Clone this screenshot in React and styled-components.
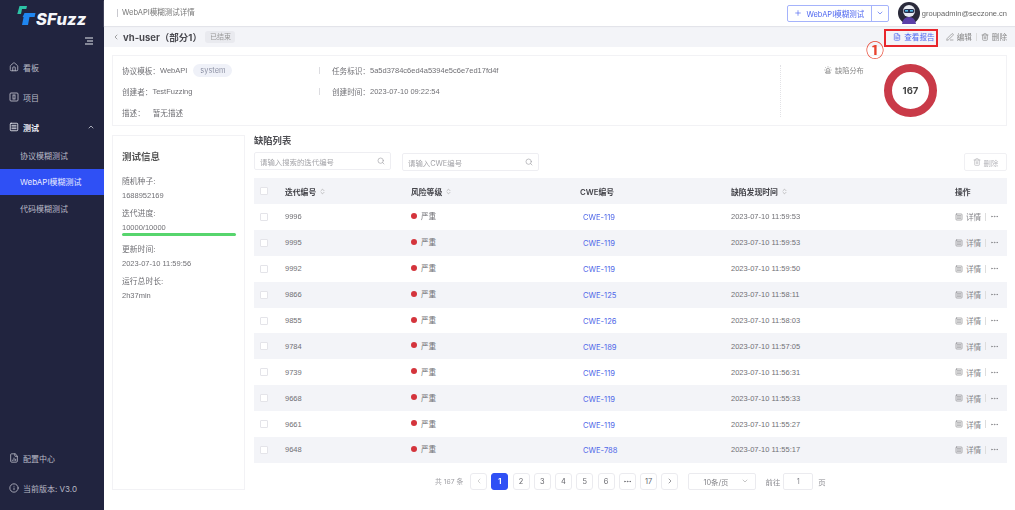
import React from "react";
import styled, { createGlobalStyle } from "styled-components";
import {
  House, SquareMenu, ChevronUp, ChevronLeft, ChevronRight, ChevronDown, Plus, FileText, PenLine,
  Trash2, Siren, Search, Ellipsis, FileChartColumn, Info, ChevronsUpDown,
} from "lucide-react";

const Global = createGlobalStyle`
  html, body { margin: 0; padding: 0; background: #fff; }
  * { box-sizing: border-box; }
  body { font-family: Inter, "Noto Sans CJK SC", sans-serif; font-size: 8px; color: #666; }
`;

const Page = styled.div`display: flex; width: 1015px; height: 510px; overflow: hidden; filter: blur(0.3px);`;
const Sidebar = styled.aside`
  width: 104px; flex: none; background: #21243f; color: #c6c7d1; display: flex; flex-direction: column;
`;
const Logo = styled.div`display: flex; height: 28px; padding: 5px 0 0 17px;`;
const LogoText = styled.span`
  font: italic 800 16.5px/17px Inter, sans-serif; color: #f4f6fa; margin: 6px 0 0 -1px; letter-spacing: .2px;
`;
const Burger = styled.div`display: flex; justify-content: flex-end; padding: 9px 11px 0 0; height: 24px; color: #e8e9ef;`;
const NavItem = styled.div`
  height: 30px; display: flex; align-items: center; gap: 4px; padding-left: 9px; font-size: 8px;
  color: ${p => (p.$strong ? "#eceef4" : "#b9bac6")}; font-weight: ${p => (p.$strong ? 600 : 400)};
  svg { flex: none; }
`;
const NavEnd = styled.span`margin-left: auto; margin-right: 9px; display: flex;`;
const SubItem = styled.div`
  height: 26.5px; display: flex; align-items: center; padding-left: 20px; font-size: 8px;
  color: ${p => (p.$active ? "#e8ebff" : "#b9bac6")}; background: ${p => (p.$active ? "#2f50f5" : "transparent")};
`;
const SideSpacer = styled.div`flex: 1;`;
const SideFoot = styled.div`height: 7px; flex: none;`;

const Main = styled.div`flex: 1; min-width: 0; display: flex; flex-direction: column; position: relative;`;
const TopBar = styled.header`
  height: 26px; flex: none; display: flex; align-items: center; padding: 0 8px 0 13px;
  box-shadow: 0 1px 1px #e3e4ea; position: relative; z-index: 1;
`;
const Crumb = styled.div`border-left: 1px solid #c9c9cf; padding-left: 4px; font-size: 7.5px; color: #777; line-height: 8px;`;
const SplitButton = styled.div`
  margin-left: auto; display: flex; height: 17px; border: 1px solid #a5b3fb; border-radius: 2px; color: #4f67f0; width: 102px;
`;
const SplitMain = styled.div`
  flex: 1; display: flex; align-items: center; justify-content: center; gap: 4px; font-size: 7.5px; border-right: 1px solid #a5b3fb;
`;
const SplitArrow = styled.div`width: 16px; display: flex; align-items: center; justify-content: center;`;
const Avatar = styled.svg`width: 22px; height: 22px; margin-left: 9px; flex: none;`;
const UserName = styled.span`margin-left: 2px; font: 7.5px "Liberation Sans", sans-serif; color: #666; white-space: nowrap;`;

const SubBar = styled.div`
  height: 21px; flex: none; background: #f3f4f8; display: flex; align-items: center; padding: 0 8px;
`;
const TitleName = styled.span`font-size: 9.5px; font-weight: 700; color: #4a4a50; margin-left: 3px;`;
const StatusTag = styled.span`
  margin-left: 3px; background: #e9eaef; color: #999; font-size: 7px; border-radius: 3px; padding: 2px 4px 2px 5px; line-height: 8px;
`;
const Actions = styled.div`margin-left: auto; display: flex; align-items: center; color: #888; font-size: 7.6px;`;
const Action = styled.span`
  display: inline-flex; align-items: center; gap: 3px; color: ${p => (p.$primary ? "#4f67f0" : "#888")};
  margin-right: ${p => p.$gap || 0}px;
`;
const ActionSep = styled.span`width: 1px; height: 8px; background: #ddd; margin: 0 4px;`;

const Content = styled.div`flex: 1; display: flex; flex-direction: column; padding: 8px 8px 0;`;
const InfoCard = styled.section`
  height: 71px; flex: none; border: 1px solid #f2f2f5; display: flex; position: relative; padding: 10px 0 0 9px;
`;
const InfoLeft = styled.div`width: 197px; display: flex; flex-direction: column; gap: 13px;`;
const InfoLine = styled.div`display: flex; align-items: center; height: 8px; gap: ${p => p.$gap || 0}px; white-space: nowrap; color: #707075; font-size: 7.6px;`;
const Latin = styled.span`font-family: "Liberation Sans", sans-serif; font-size: 7.5px;`;
const Pill = styled.span`
  background: #eff1f8; color: #8f93a6; border-radius: 7px; padding: 0 7px; height: 13px; line-height: 13px; margin-left: 6px; font-size: 7.4px;
`;
const InfoMid = styled.div`
  width: 461px; display: flex; flex-direction: column; gap: 13px; position: relative; padding-left: 13px;
`;
const MidRow = styled(InfoLine)`
  &::before { content: ""; position: absolute; left: 0; width: 1px; height: 7px; background: #dcdce0; }
`;
const ChartArea = styled.div`
  flex: 1; border-left: 1px dotted #e2e2e6; margin-top: -1px; height: 52px; position: relative; display: flex;
`;
const ChartLabel = styled.div`display: flex; align-items: center; gap: 3px; font-size: 7.2px; color: #888; margin: 0 0 0 43px; height: 9px;`;
const Donut = styled.div`
  position: absolute; left: 103px; top: -1px; width: 53px; height: 53px; display: flex; align-items: center; justify-content: center;
  font-size: 9.5px; font-weight: 700; color: #444;
  svg { position: absolute; inset: 0; }
`;

const Row = styled.div`flex: 1; display: flex; gap: 9px; margin-top: 9px; min-height: 0;`;
const SideCard = styled.section`
  width: 133px; height: 355px; flex: none; border: 1px solid #f2f2f5; padding: 15px 9px 0;
  display: flex; flex-direction: column; color: #707075; font-size: 7.8px;
`;
const SideTitle = styled.div`font-size: 9.5px; font-weight: 600; color: #555; line-height: 12px; margin-bottom: 14px;`;
const Stat = styled.div`display: flex; flex-direction: column; gap: 5px; margin-bottom: 9px; line-height: 9px;`;
const ProgressTrack = styled.div`height: 3px; border-radius: 2px; background: #57d56d; width: 114px; margin: -4px 0 0;`;

const List = styled.section`flex: 1; min-width: 0; display: flex; flex-direction: column;`;
const ListTitle = styled.h2`margin: 0; height: 17px; font-size: 9.3px; font-weight: 700; color: #4d4d52; line-height: 12px;`;
const Filters = styled.div`display: flex; gap: 11px; height: 19px; margin-bottom: 7px;`;
const SearchBox = styled.div`
  width: 137px; height: 18px; border: 1px solid #eeeef2; border-radius: 2px; display: flex; align-items: center;
  justify-content: space-between; padding: 0 5px; color: #a3a3a8; font-size: 7.4px; margin-top: ${p => p.$drop || 0}px;
`;
const DeleteBtn = styled.div`
  margin-left: auto; width: 43px; height: 18px; margin-top: 1px; border: 1px solid #f0f0f3; border-radius: 2px;
  display: flex; align-items: center; justify-content: center; gap: 3px; color: #b5b5ba; font-size: 7.4px;
`;
const columns = "31px 126px 169px 151px 224px 52px";
const HeadRow = styled.div`
  display: grid; grid-template-columns: ${columns}; height: 26px; align-items: center; background: #f3f4f8;
  font-weight: 600; color: #44444a; font-size: 7.8px;
`;
const BodyRow = styled.div`
  display: grid; grid-template-columns: ${columns}; height: 25.9px; align-items: center;
  background: ${p => (p.$alt ? "#f3f4f8" : "#fff")}; color: #707075; font-size: 7.6px;
`;
const Check = styled.span`
  width: 8px; height: 8px; border: 1px solid #e4e4e9; border-radius: 1px; background: #fff; margin-left: 6px; display: block;
`;
const HeadCell = styled.span`display: inline-flex; align-items: center; gap: 3px;`;
const Risk = styled.span`display: inline-flex; align-items: center; gap: 4px; margin-top: -2px;`;
const Dot = styled.i`width: 6px; height: 6px; border-radius: 50%; background: #d4343c; display: block;`;
const CweLink = styled.span`color: #4f67e8; margin: 2px 0 0 3px;`;
const Ops = styled.span`display: flex; align-items: center; gap: 3px; color: #85858a;`;
const OpSep = styled.span`width: 1px; height: 8px; background: #ddd; margin: 0 1px;`;

const Pager = styled.div`display: flex; align-items: center; height: 17px; margin-top: 10px; padding-left: 181px; font-size: 7.4px; color: #8a8a90;`;
const Total = styled.span`width: 35px; font-size: 6.8px; color: #a0a0a5;`;
const PageBtn = styled.span`
  width: 17px; height: 17px; border: 1px solid ${p => (p.$on ? "#2f50f5" : "#ebebef")}; border-radius: 3px; margin-right: 4.25px;
  display: flex; align-items: center; justify-content: center;
  background: ${p => (p.$on ? "#2f50f5" : "#fff")}; color: ${p => (p.$on ? "#fff" : "#66666c")}; font-weight: ${p => (p.$on ? 700 : 400)};
`;
const PageSize = styled.span`
  width: 68px; height: 17px; margin-left: 5px; border: 1px solid #ebebef; border-radius: 2px; display: flex; align-items: center;
  justify-content: flex-end; gap: 12px; padding-right: 6px; color: #85858a;
`;
const GoLabel = styled.span`margin: 0 3px 0 10px;`;
const GoInput = styled.span`
  width: 30px; height: 17px; border: 1px solid #ebebef; border-radius: 2px; display: flex; align-items: center; justify-content: center; margin-right: 5px;
`;

const Highlight = styled.div`
  position: absolute; left: 780px; top: 29px; width: 54px; height: 18px; border: 2px solid #e8262c; z-index: 2;
`;
const Circled = styled.span`
  position: absolute; left: 762px; top: 39px; font: 700 18px/20px "Noto Sans CJK SC", sans-serif; color: #e8432f; z-index: 2;
`;

const rows = [
  ["9996", "CWE-119", "2023-07-10 11:59:53"],
  ["9995", "CWE-119", "2023-07-10 11:59:53"],
  ["9992", "CWE-119", "2023-07-10 11:59:50"],
  ["9866", "CWE-125", "2023-07-10 11:58:11"],
  ["9855", "CWE-126", "2023-07-10 11:58:03"],
  ["9784", "CWE-189", "2023-07-10 11:57:05"],
  ["9739", "CWE-119", "2023-07-10 11:56:31"],
  ["9668", "CWE-119", "2023-07-10 11:55:33"],
  ["9661", "CWE-119", "2023-07-10 11:55:27"],
  ["9648", "CWE-788", "2023-07-10 11:55:17"],
];
const pages = ["2", "3", "4", "5", "6"];

const Sort = () => <ChevronsUpDown size={7} color="#999" strokeWidth={2} />;

const LogoMark = () => (
  <svg width="20" height="21" viewBox="0 0 20 21" style={{ flex: "none" }}>
    <path d="M2.5 1 L10 1 L9.3 4 L5 4 L4 9 L0.3 9 Z" fill="#2dc3a6" />
    <path d="M7.5 8 L18.5 8 L17.6 12 L12.5 12 L11 20 L5 20 L6.6 12 L5.6 12 Z" fill="#1f86f0" />
  </svg>
);

const ProjectIcon = () => (
  <svg width="10" height="10" viewBox="0 0 10 10" fill="none" stroke="currentColor" strokeWidth="0.9">
    <rect x="1" y="1" width="8" height="8" rx="1" />
    <rect x="4" y="3" width="2" height="4" />
  </svg>
);

const AvatarIcon = () => (
  <Avatar viewBox="0 0 22 22">
    <circle cx="11" cy="11" r="11" fill="#2a2a3a" />
    <path d="M4 22 Q5 15 11 15 Q17 15 18 22 Z" fill="#5b3fa8" />
    <circle cx="11" cy="9" r="6" fill="#e9ecf2" />
    <rect x="5.5" y="7" width="11" height="4" rx="2" fill="#26304d" />
    <rect x="7" y="8" width="3" height="1.6" fill="#56b8e8" />
    <rect x="12" y="8" width="3" height="1.6" fill="#56b8e8" />
  </Avatar>
);

export default function App() {
  return (
    <Page>
      <Global />
      <Sidebar>
        <Logo><LogoMark /><LogoText>SFuzz</LogoText></Logo>
        <Burger>
          <svg width="8" height="8" viewBox="0 0 8 8" stroke="currentColor" strokeWidth="1.1">
            <path d="M0 1H8M2 4H8M0 7H8" />
          </svg>
        </Burger>
        <NavItem><House size={10} />看板</NavItem>
        <NavItem><ProjectIcon />项目</NavItem>
        <NavItem $strong><SquareMenu size={10} />测试<NavEnd><ChevronUp size={8} /></NavEnd></NavItem>
        <SubItem>协议模糊测试</SubItem>
        <SubItem $active>WebAPI模糊测试</SubItem>
        <SubItem>代码模糊测试</SubItem>
        <SideSpacer />
        <NavItem><FileChartColumn size={10} />配置中心</NavItem>
        <NavItem><Info size={10} />当前版本: V3.0</NavItem>
        <SideFoot />
      </Sidebar>
      <Main>
        <TopBar>
          <Crumb>WebAPI模糊测试详情</Crumb>
          <SplitButton>
            <SplitMain><Plus size={8} />WebAPI模糊测试</SplitMain>
            <SplitArrow><ChevronDown size={8} /></SplitArrow>
          </SplitButton>
          <AvatarIcon />
          <UserName>groupadmin@seczone.cn</UserName>
        </TopBar>
        <SubBar>
          <ChevronLeft size={8} color="#777" />
          <TitleName>vh-user（部分1）</TitleName>
          <StatusTag>已结束</StatusTag>
          <Actions>
            <Action $primary $gap={11}><FileText size={8} />查看报告</Action>
            <Action><PenLine size={8} />编辑</Action>
            <ActionSep />
            <Action><Trash2 size={8} />删除</Action>
          </Actions>
        </SubBar>
        <Highlight />
        <Circled>①</Circled>
        <Content>
          <InfoCard>
            <InfoLeft>
              <InfoLine>协议模板：<Latin>WebAPI</Latin><Pill>system</Pill></InfoLine>
              <InfoLine>创建者：<Latin>TestFuzzing</Latin></InfoLine>
              <InfoLine $gap={8}>描述：<span>暂无描述</span></InfoLine>
            </InfoLeft>
            <InfoMid>
              <MidRow>任务标识：<Latin>5a5d3784c6ed4a5394e5c6e7ed17fd4f</Latin></MidRow>
              <MidRow>创建时间：<Latin>2023-07-10 09:22:54</Latin></MidRow>
            </InfoMid>
            <ChartArea>
              <ChartLabel><Siren size={8} />缺陷分布</ChartLabel>
              <Donut>
                <svg viewBox="0 0 53 53"><circle cx="26.5" cy="26.5" r="22.5" fill="none" stroke="#c93a48" strokeWidth="8" /></svg>
                167
              </Donut>
            </ChartArea>
          </InfoCard>
          <Row>
            <SideCard>
              <SideTitle>测试信息</SideTitle>
              <Stat><span>随机种子:</span><Latin>1688952169</Latin></Stat>
              <Stat><span>迭代进度:</span><Latin>10000/10000</Latin><ProgressTrack /></Stat>
              <Stat><span>更新时间:</span><Latin>2023-07-10 11:59:56</Latin></Stat>
              <Stat><span>运行总时长:</span><Latin>2h37min</Latin></Stat>
            </SideCard>
            <List>
              <ListTitle>缺陷列表</ListTitle>
              <Filters>
                <SearchBox>请输入搜索的迭代编号<Search size={8} /></SearchBox>
                <SearchBox $drop={1}>请输入CWE编号<Search size={8} /></SearchBox>
                <DeleteBtn><Trash2 size={8} />删除</DeleteBtn>
              </Filters>
              <HeadRow>
                <Check />
                <HeadCell>迭代编号<Sort /></HeadCell>
                <HeadCell>风险等级<Sort /></HeadCell>
                <HeadCell>CWE编号</HeadCell>
                <HeadCell>缺陷发现时间<Sort /></HeadCell>
                <HeadCell>操作</HeadCell>
              </HeadRow>
              {rows.map((r, i) => (
                <BodyRow key={r[0]} $alt={i % 2 === 1}>
                  <Check />
                  <Latin>{r[0]}</Latin>
                  <Risk><Dot />严重</Risk>
                  <CweLink>{r[1]}</CweLink>
                  <Latin>{r[2]}</Latin>
                  <Ops><SquareMenu size={8} />详情<OpSep /><Ellipsis size={9} /></Ops>
                </BodyRow>
              ))}
              <Pager>
                <Total>共 167 条</Total>
                <PageBtn><ChevronLeft size={8} color="#bbb" /></PageBtn>
                <PageBtn $on>1</PageBtn>
                {pages.map(p => <PageBtn key={p}>{p}</PageBtn>)}
                <PageBtn><Ellipsis size={9} /></PageBtn>
                <PageBtn>17</PageBtn>
                <PageBtn><ChevronRight size={8} /></PageBtn>
                <PageSize>10条/页<ChevronDown size={8} color="#aaa" /></PageSize>
                <GoLabel>前往</GoLabel>
                <GoInput>1</GoInput>
                页
              </Pager>
            </List>
          </Row>
        </Content>
      </Main>
    </Page>
  );
}
